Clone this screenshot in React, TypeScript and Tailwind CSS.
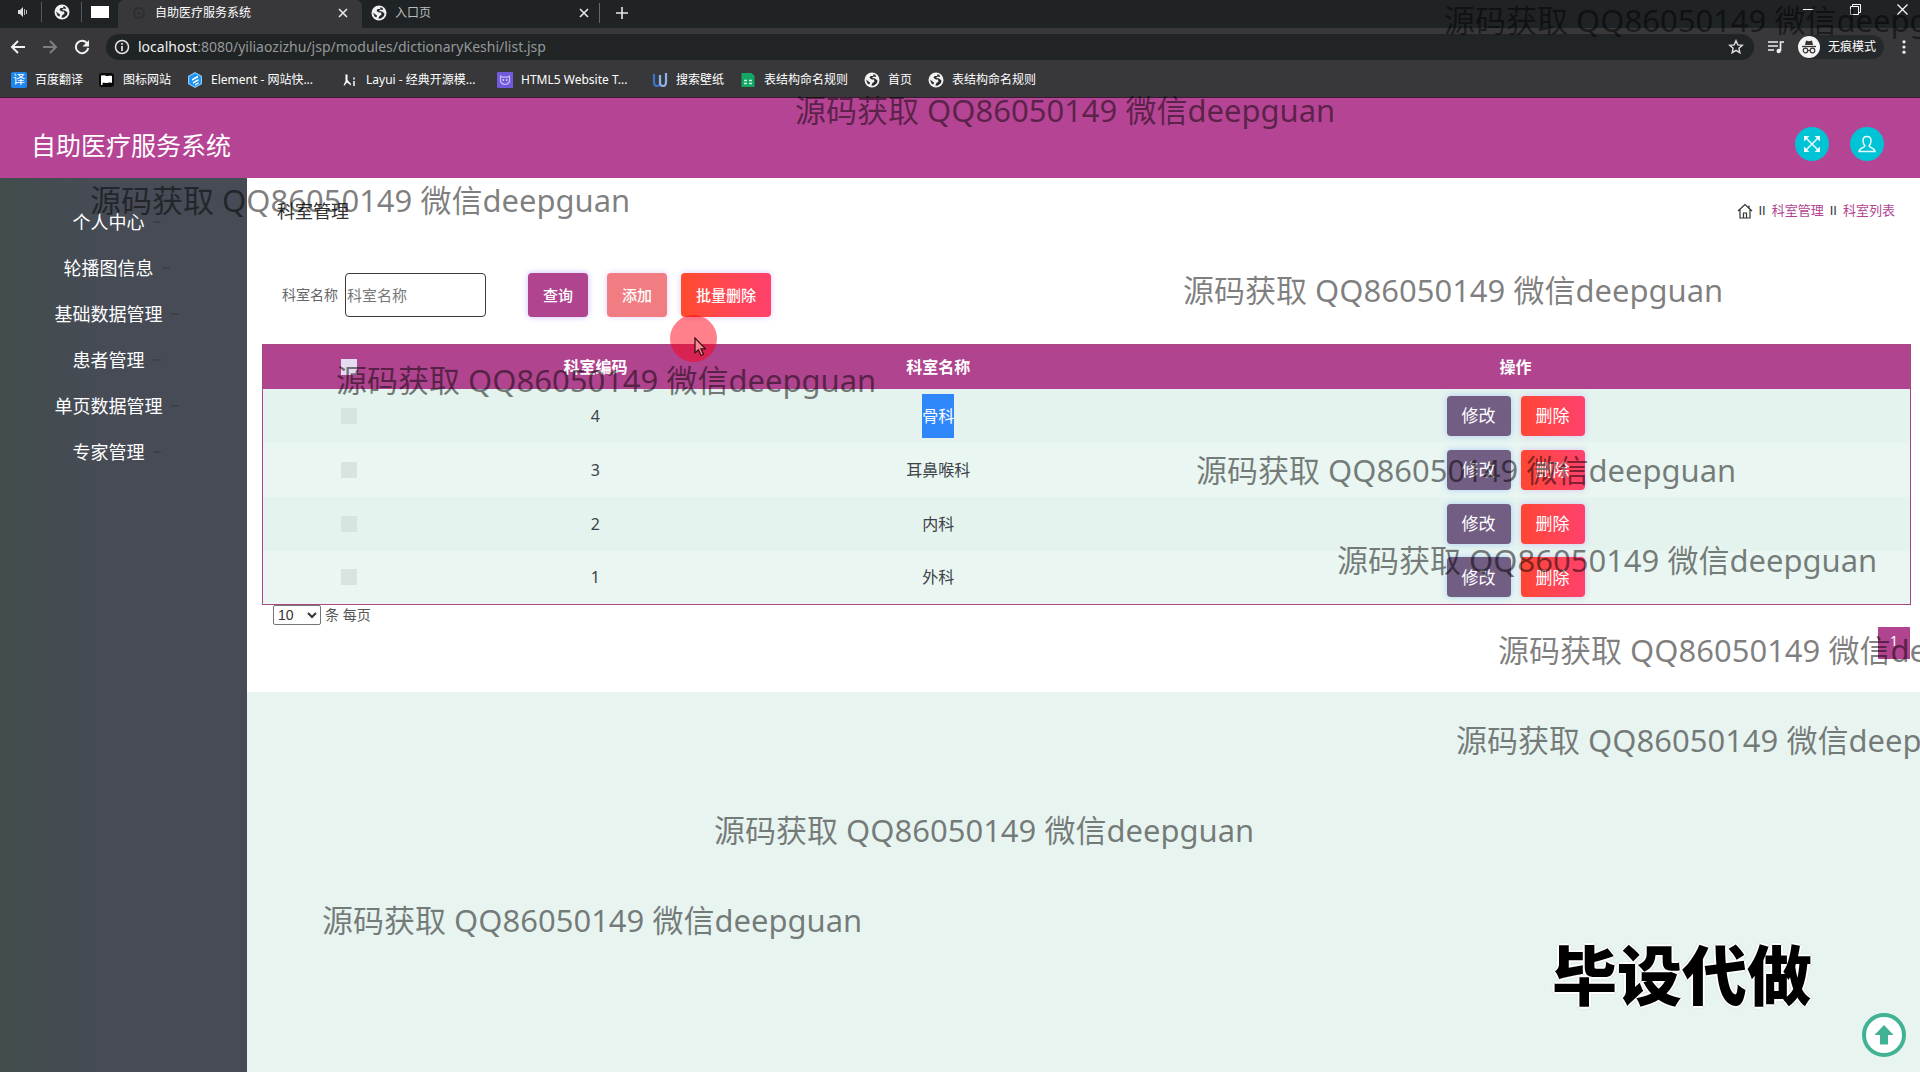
import React from "react";

type SvgProps = { className?: string };

function Globe({ className = "size-4" }: SvgProps) {
  return (
    <svg viewBox="0 0 16 16" className={className} aria-hidden="true">
      <circle cx="8" cy="8" r="7.5" fill="#f1f1f1" />
      <path
        d="M9.500 2.200L9 4H6.500L5.500 6 8 7.500h2l.5 2-2.500 2-.5 2.300 2.500-.3 3-2.500.5-2.500-2.500-2-3-.5 1.500-1.500 2.500.5-.5-2zM2 7.500L4.500 9.500 6 10.500 5.500 12.500 3.500 11.500z"
        fill="#26292b"
      />
    </svg>
  );
}

function TranslateIcon() {
  return (
    <span className="flex size-4 shrink-0 items-center justify-center rounded-xs bg-[#1e86ee] text-xs leading-4 text-white">
      译
    </span>
  );
}

function FlagIcon() {
  return (
    <svg viewBox="0 0 16 16" className="size-4 shrink-0" aria-hidden="true">
      <rect x="0" y="1" width="15" height="14" rx="3" fill="#0a0a0a" />
      <path d="M2 3.500h1.500c2-.8 3.500.8 5.500.5 1.500-.2 2.500-.5 4 0v7c-1.500-.6-3-.4-4.200 0-1.600.4-2.800-.8-5.300-.2V13H2z" fill="#fff" />
    </svg>
  );
}

function ElementIcon() {
  return (
    <svg viewBox="0 0 16 16" className="size-4 shrink-0" aria-hidden="true">
      <path d="M8 0l7 4v8l-7 4-7-4V4z" fill="#8fcbfb" />
      <path d="M8 1.200l5.800 3.400v6.800L8 14.800l-5.800-3.400V4.600z" fill="#1f93f3" />
      <path d="M5 7l6-3.400v1.800L5 8.800zM6 10l5.500-3v1.800L6 11.800zM8 12.300l3.500-2v1.500L8 13.500z" fill="#fff" />
    </svg>
  );
}

function LayuiIcon() {
  return (
    <svg viewBox="0 0 16 16" className="size-4 shrink-0" aria-hidden="true">
      <path d="M3.500 2.500h2V8l3.500 4v1.500L5 10.500 2.500 13.500H1.500L3.500 9z" fill="#fff" />
      <path d="M12 5.500v2M12 9v5" stroke="#ddd" strokeWidth="1.800" />
    </svg>
  );
}

function TemplateIcon() {
  return (
    <svg viewBox="0 0 16 16" className="size-4 shrink-0" aria-hidden="true">
      <rect width="16" height="16" rx="1" fill="#7059dc" />
      <path d="M3.500 4l2 1.200h5l2-1.200v5.500Q11 12.500 8 12.500T3.500 9.500z" fill="none" stroke="#c9bdf8" strokeWidth="1.200" />
      <circle cx="6.300" cy="8" r=".9" fill="#dcd4ff" />
      <circle cx="9.700" cy="8" r=".9" fill="#dcd4ff" />
    </svg>
  );
}

function WallpaperIcon() {
  return (
    <svg viewBox="0 0 16 16" className="size-4 shrink-0" aria-hidden="true">
      <path d="M2 2v8q0 4 3 4t3-4V3" fill="none" stroke="#3f74c9" strokeWidth="2.200" />
      <path d="M8 3v7q0 4 3 4t3-4V1" fill="none" stroke="#8db4ea" strokeWidth="2.200" />
    </svg>
  );
}

function SheetIcon() {
  return (
    <svg viewBox="0 0 16 16" className="size-4 shrink-0" aria-hidden="true">
      <path d="M1.500 1h10l3 3v11h-13z" fill="#12a765" />
      <path d="M4 8.500h3M9 8.500h3M4 11.500h3M9 11.500h3" stroke="#c5f5dd" strokeWidth="1.400" />
    </svg>
  );
}

const bookmarks = [
  { label: "百度翻译", icon: <TranslateIcon />, width: "" },
  { label: "图标网站", icon: <FlagIcon />, width: "" },
  { label: "Element - 网站快...", icon: <ElementIcon />, width: "w-[139px]" },
  { label: "Layui - 经典开源模...", icon: <LayuiIcon />, width: "w-[139px]" },
  { label: "HTML5 Website T...", icon: <TemplateIcon />, width: "w-[139px]" },
  { label: "搜索壁纸", icon: <WallpaperIcon />, width: "" },
  { label: "表结构命名规则", icon: <SheetIcon />, width: "" },
  { label: "首页", icon: <Globe className="size-4 shrink-0" />, width: "" },
  { label: "表结构命名规则", icon: <Globe className="size-4 shrink-0" />, width: "" },
];

function CloseGlyph() {
  return (
    <svg viewBox="0 0 10 10" className="size-[10px]" aria-hidden="true">
      <path d="M1 1l8 8M9 1L1 9" stroke="#e8e8e8" strokeWidth="1.600" />
    </svg>
  );
}

function TabStrip() {
  return (
    <div className="flex h-7 bg-[#1f2325]">
      <div className="flex w-[118px] items-center pb-1">
        <button aria-label="静音标签页" className="flex h-5 w-[42px] items-center justify-center border-r border-[#55585a] pl-1">
          <svg viewBox="0 0 12 12" className="size-3">
            <path d="M1 4h2l3-3v10L3 8H1z" fill="#ddd" />
            <path d="M7.500 3v6M9.500 4v4" stroke="#bbb" strokeWidth="1" />
          </svg>
        </button>
        <button aria-label="固定标签页" className="flex h-5 w-10 items-center justify-center border-r border-[#55585a]">
          <Globe className="size-4" />
        </button>
        <button aria-label="空白标签页" className="flex w-9 justify-center">
          <span className="h-3 w-[18px] bg-white" />
        </button>
      </div>
      <div className="flex w-[244px] items-center rounded-t-md bg-[#38383b] pb-[3px] pl-[13px] pr-[14px]">
        <svg viewBox="0 0 16 16" className="size-4" aria-hidden="true">
          <circle cx="8" cy="8" r="5" fill="none" stroke="#2b2e30" strokeWidth="2" />
          <circle cx="8" cy="8" r="1.500" fill="#2b2e30" />
        </svg>
        <span className="ml-2 flex-1 text-xs text-white">自助医疗服务系统</span>
        <button aria-label="关闭标签页">
          <CloseGlyph />
        </button>
      </div>
      <div className="flex w-[238px] items-center pb-[3px] pl-[9px]">
        <Globe />
        <span className="ml-2 flex-1 text-xs text-[#b9bcbe]">入口页</span>
        <button aria-label="关闭标签页" className="mr-[10px]">
          <CloseGlyph />
        </button>
        <span className="h-5 w-px bg-[#66696b]" />
      </div>
      <button aria-label="新建标签页" className="flex w-11 items-center justify-center pb-[3px]">
        <svg viewBox="0 0 12 12" className="size-3">
          <path d="M6 0v12M0 6h12" stroke="#e8e8e8" strokeWidth="1.600" />
        </svg>
      </button>
      <div className="ml-auto flex h-[18px] items-center gap-9 pr-3">
        <button aria-label="最小化">
          <svg viewBox="0 0 11 11" className="size-[11px]">
            <path d="M0 5.500h11" stroke="#fff" />
          </svg>
        </button>
        <button aria-label="还原">
          <svg viewBox="0 0 11 11" className="size-[11px]">
            <path d="M.5 2.500h8v8h-8zM2.500 2.500v-2h8v8h-2" fill="none" stroke="#fff" />
          </svg>
        </button>
        <button aria-label="关闭">
          <svg viewBox="0 0 11 11" className="size-[11px]">
            <path d="M.5.5l10 10M10.500.5l-10 10" stroke="#fff" strokeWidth="1.200" />
          </svg>
        </button>
      </div>
    </div>
  );
}

function AddressBar() {
  return (
    <div className="flex h-9 items-center bg-[#38383b] pr-2 pt-0.5">
      <div className="flex w-[106px] items-center gap-4 pl-[10px]">
        <button aria-label="后退">
          <svg viewBox="0 0 16 16" className="size-4">
            <path d="M15 8H2M8 2L2 8l6 6" fill="none" stroke="#f2f2f2" strokeWidth="2" />
          </svg>
        </button>
        <button aria-label="前进">
          <svg viewBox="0 0 16 16" className="size-4">
            <path d="M1 8h13M8 2l6 6-6 6" fill="none" stroke="#7d7f81" strokeWidth="2" />
          </svg>
        </button>
        <button aria-label="重新加载">
          <svg viewBox="0 0 16 16" className="size-4">
            <path d="M13.200 4.500A6.200 6.200 0 1 0 14.200 9" fill="none" stroke="#f2f2f2" strokeWidth="2" />
            <path d="M15 1v6.500H8.500z" fill="#f2f2f2" />
          </svg>
        </button>
      </div>
      <div className="flex h-[26px] flex-1 items-center rounded-full bg-[#202425] pl-2 pr-[10px]">
        <svg viewBox="0 0 16 16" className="size-4" aria-hidden="true">
          <circle cx="8" cy="8" r="6.500" fill="none" stroke="#e6e6e6" strokeWidth="1.500" />
          <path d="M8 4v1.800M8 7v5" stroke="#e6e6e6" strokeWidth="1.700" />
        </svg>
        <span className="ml-2 text-sm text-[#95989a]">
          <span className="text-[#f0f0f0]">localhost</span>
          :8080/yiliaozizhu/jsp/modules/dictionaryKeshi/list.jsp
        </span>
        <button aria-label="收藏" className="ml-auto">
          <svg viewBox="0 0 16 16" className="size-4">
            <path
              d="M8 1.800l1.800 4.100 4.500.4-3.400 3 1 4.400L8 11.400l-3.900 2.300 1-4.400-3.400-3 4.500-.4z"
              fill="none"
              stroke="#e0e0e0"
              strokeWidth="1.400"
            />
          </svg>
        </button>
      </div>
      <button aria-label="媒体控制" className="ml-[14px]">
        <svg viewBox="0 0 16 16" className="size-4">
          <path d="M0 3h10M0 7h10M0 11h6" stroke="#eee" strokeWidth="1.700" />
          <path d="M12.500 12V3H16" fill="none" stroke="#eee" strokeWidth="1.700" />
          <circle cx="10.700" cy="12" r="2.200" fill="#eee" />
        </svg>
      </button>
      <button className="ml-[14px] flex h-6 items-center gap-2 rounded-full bg-[#26292b] pr-2 text-xs text-white">
        <svg viewBox="0 0 22 22" className="size-[22px]" aria-hidden="true">
          <circle cx="11" cy="11" r="11" fill="#f4f4f4" />
          <path d="M4 10.500h14" stroke="#333" strokeWidth="1.300" />
          <path d="M7 9l1-4.500 3 .8 3-.8L15 9z" fill="#333" />
          <circle cx="7.500" cy="14.500" r="2.300" fill="none" stroke="#333" strokeWidth="1.200" />
          <circle cx="14.500" cy="14.500" r="2.300" fill="none" stroke="#333" strokeWidth="1.200" />
          <path d="M9.800 14.500h2.400" stroke="#333" />
        </svg>
        无痕模式
      </button>
      <button aria-label="菜单" className="ml-3">
        <svg viewBox="0 0 16 16" className="size-4">
          <circle cx="8" cy="2.800" r="1.600" fill="#eee" />
          <circle cx="8" cy="8" r="1.600" fill="#eee" />
          <circle cx="8" cy="13.200" r="1.600" fill="#eee" />
        </svg>
      </button>
    </div>
  );
}

function BookmarkBar() {
  return (
    <nav
      aria-label="书签"
      className="flex h-[34px] items-center gap-4 whitespace-nowrap border-b border-[#3a1a33] bg-[#38383b] px-[11px] pb-0.5 text-xs text-white"
    >
      {bookmarks.map((b, i) => (
        <a key={i} href="#" className={`flex items-center gap-2 ${b.width}`}>
          {b.icon}
          {b.label}
        </a>
      ))}
    </nav>
  );
}

function AppHeader() {
  return (
    <header className="flex h-20 items-center bg-[#b64494] pl-[31px] pr-9">
      <h1 className="mt-[14px] text-[25px] leading-8 text-white">自助医疗服务系统</h1>
      <div className="ml-auto mt-3 flex gap-[21px]">
        <button aria-label="全屏" className="flex size-[34px] items-center justify-center rounded-full bg-[#00c4d6]">
          <svg viewBox="0 0 16 16" className="size-4">
            <path d="M2 2l12 12M14 2L2 14" stroke="#e8fbff" strokeWidth="1.500" />
            <path d="M0 0h5.500L0 5.500zM16 0v5.500L10.500 0zM0 16v-5.500L5.500 16zM16 16h-5.500l5.500-5.500z" fill="#e8fbff" />
          </svg>
        </button>
        <button aria-label="个人信息" className="flex size-[34px] items-center justify-center rounded-full bg-[#00c4d6]">
          <svg viewBox="0 0 18 18" className="size-[18px]">
            <path
              d="M7 11C5.500 9.500 5 8 5 5.500 5 3 6.500 1.500 9 1.500S13 3 13 5.500c0 2.500-.5 4-2 5.500 0 1.500 5.500 1.500 6 5.500H1C1.500 12.500 7 12.500 7 11z"
              fill="none"
              stroke="#e8fbff"
              strokeWidth="1.500"
            />
          </svg>
        </button>
      </div>
    </header>
  );
}

const menu = ["个人中心", "轮播图信息", "基础数据管理", "患者管理", "单页数据管理", "专家管理"];

function Sidebar() {
  return (
    <aside className="w-[247px] shrink-0 bg-linear-to-r from-[#424d4c] to-[#464b55] to-40% pt-[21px]">
      <ul className="pr-[14px]">
        {menu.map((m) => (
          <li key={m}>
            <a href="#" className="flex h-[46px] items-center justify-center gap-2 text-lg text-white">
              {m}
              <span className="h-0.5 w-2 rounded-full bg-[#3a4148]" />
            </a>
          </li>
        ))}
      </ul>
    </aside>
  );
}

const rows = [
  { code: 4, name: "骨科", selected: true },
  { code: 3, name: "耳鼻喉科", selected: false },
  { code: 2, name: "内科", selected: false },
  { code: 1, name: "外科", selected: false },
];

function DepartmentTable() {
  return (
    <table className="w-full table-fixed border-collapse border border-[#a8487f] text-center text-base text-[#3c4248]">
      <colgroup>
        <col className="w-[10.5%]" />
        <col className="w-[19.4%]" />
        <col className="w-[22.2%]" />
        <col />
      </colgroup>
      <thead>
        <tr className="h-11 bg-[#b0448f] text-white">
          <th>
            <input type="checkbox" aria-label="全选" className="mx-auto block size-4 appearance-none bg-[#e4dcf0]" />
          </th>
          <th className="font-bold">科室编码</th>
          <th className="font-bold">科室名称</th>
          <th className="font-bold">操作</th>
        </tr>
      </thead>
      <tbody>
        {rows.map((r) => (
          <tr key={r.code} className="h-[54px] odd:bg-[#e5f3ef] even:bg-[#e9f6f1]">
            <td>
              <input
                type="checkbox"
                aria-label={`选择${r.name}`}
                className="mx-auto block size-4 appearance-none bg-[#d8e4e0]"
              />
            </td>
            <td>{r.code}</td>
            <td>
              {r.selected ? (
                <span className="inline-block bg-[#2f87fa] leading-[44px] text-white">{r.name}</span>
              ) : (
                r.name
              )}
            </td>
            <td>
              <div className="flex justify-center gap-[10px] text-[17px] text-white">
                <button className="h-10 w-16 rounded-sm bg-[#725d83] shadow-[0_0_6px_#a9cdf5]">修改</button>
                <button className="h-10 w-16 rounded-sm bg-linear-to-r from-[#ff4630] to-[#ff416c] shadow-[0_0_6px_#d3c4f0]">
                  删除
                </button>
              </div>
            </td>
          </tr>
        ))}
      </tbody>
    </table>
  );
}

function Content() {
  return (
    <main className="min-w-0 flex-1 bg-[#e8f4f0]">
      <section className="bg-white pb-[33px] pl-[15px] pr-[9px] pt-[19px]">
        <div className="flex h-7 items-center pl-[15px] pr-4">
          <h2 className="text-lg text-[#333]">科室管理</h2>
          <nav aria-label="面包屑" className="ml-auto flex items-center gap-[6px] text-[13px] text-[#333]">
            <a href="#" aria-label="首页">
              <svg viewBox="0 0 16 16" className="size-4">
                <path
                  d="M1 8l7-6.500L15 8M3 6.500V15h10V6.500M6.500 15v-5h3v5M12 2.500v2.500"
                  fill="none"
                  stroke="#333"
                  strokeWidth="1.200"
                />
              </svg>
            </a>
            <span className="font-['Liberation_Sans',sans-serif]">II</span>
            <a href="#" className="text-[#b0448f]">科室管理</a>
            <span className="font-['Liberation_Sans',sans-serif]">II</span>
            <a href="#" className="text-[#b0448f]">科室列表</a>
          </nav>
        </div>
        <form className="mt-12 flex h-11 items-center pl-5" onSubmit={(e) => e.preventDefault()}>
          <label htmlFor="dept" className="text-sm text-[#666]">科室名称</label>
          <input
            id="dept"
            placeholder="科室名称"
            className="ml-[7px] h-11 w-[141px] rounded-sm border border-[#3a3a3a] px-px text-[15px] placeholder:text-[#777]"
          />
          <div className="ml-[42px] flex text-[15px] font-medium text-white">
            <button className="h-11 w-[60px] rounded-sm bg-[#b0448f] shadow-[0_0_6px_#cdb8ff]">查询</button>
            <button className="ml-[19px] h-11 w-[60px] rounded-sm bg-[#f17c82] shadow-[0_0_6px_#e3d3f5]">添加</button>
            <button className="ml-[14px] h-11 w-[90px] rounded-sm bg-linear-to-r from-[#ff4b2b] to-[#ff416c] shadow-[0_0_6px_#dcc8fa]">
              批量删除
            </button>
          </div>
        </form>
        <div className="mt-[27px]">
          <DepartmentTable />
        </div>
        <div className="flex items-center gap-1 pl-[11px] text-sm leading-5 text-[#555]">
          <select
            aria-label="每页条数"
            className="h-5 w-12 rounded-xs border border-[#767676] bg-white font-['Liberation_Sans',sans-serif] text-sm leading-4 text-[#333]"
          >
            <option>10</option>
          </select>
          <span>条 每页</span>
        </div>
        <div className="mt-0.5 flex justify-end pr-px">
          <button className="size-8 bg-[#b0448f] pb-1 text-sm text-white">1</button>
        </div>
      </section>
    </main>
  );
}

const marks = [
  "left-[1444px] top-0",
  "left-[795px] top-[90px]",
  "left-[90px] top-[180px]",
  "left-[1183px] top-[270px]",
  "left-[336px] top-[360px]",
  "left-[1196px] top-[450px]",
  "left-[1337px] top-[540px]",
  "left-[1498px] top-[630px]",
  "left-[1456px] top-[720px]",
  "left-[714px] top-[810px]",
  "left-[322px] top-[900px]",
];

function Overlay() {
  return (
    <div className="pointer-events-none absolute inset-0 overflow-hidden">
      {marks.map((pos) => (
        <span key={pos} className={`absolute whitespace-nowrap text-[31px] leading-10 text-black/50 ${pos}`}>
          源码获取 QQ86050149 微信deepguan
        </span>
      ))}
      <span className="absolute left-[670px] top-[315px] size-[47px] rounded-full bg-[#ff0014]/50" />
      <svg viewBox="0 0 12 20" className="absolute left-[694px] top-[337px] h-5 w-3" aria-hidden="true">
        <path d="M1 1v15l3.500-3.200L7 18.500l2.500-1.200L7 11.800h4.500z" fill="#f58a92" stroke="#3a0a12" strokeWidth="1.200" />
      </svg>
      <span className="absolute bottom-[52px] right-[108px] whitespace-nowrap font-['Noto_Sans_CJK_SC',sans-serif] text-[65px] font-black leading-[96px] text-black [text-shadow:2px_0_0_#fff,-2px_0_0_#fff,0_2px_0_#fff,0_-2px_0_#fff,0_0_3px_#555]">
        毕设代做
      </span>
      <button
        aria-label="返回顶部"
        className="pointer-events-auto absolute bottom-[15px] right-[14px] flex size-11 items-center justify-center rounded-full border-4 border-[#42b294] bg-white"
      >
        <svg viewBox="0 0 20 20" className="size-5">
          <path d="M10 0l9.500 10H14v9.500H6V10H.5z" fill="#42b294" />
        </svg>
      </button>
    </div>
  );
}

export default function App() {
  return (
    <div className="relative flex min-h-screen flex-col font-['Noto_Sans','Noto_Sans_CJK_SC',sans-serif]">
      <TabStrip />
      <AddressBar />
      <BookmarkBar />
      <AppHeader />
      <div className="flex flex-1">
        <Sidebar />
        <Content />
      </div>
      <Overlay />
    </div>
  );
}
